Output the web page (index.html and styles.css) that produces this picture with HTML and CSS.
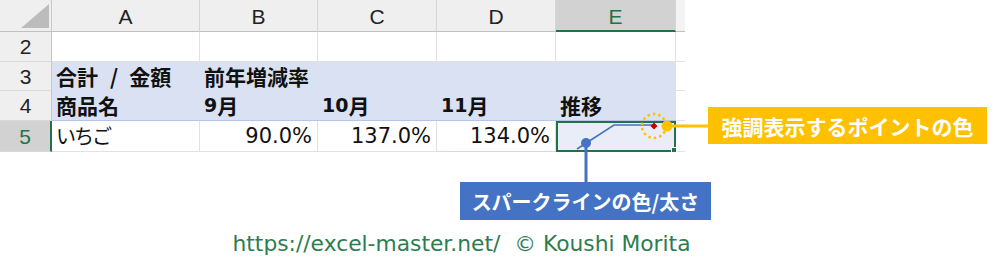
FILE: index.html
```html
<!DOCTYPE html>
<html lang="ja">
<head>
<meta charset="utf-8">
<link rel="stylesheet" href="styles.css">
</head>
<body>
<div class="page">
  <div class="sheet">
    <div class="row hdr-row">
      <div class="c rh corner"><svg class="tri" width="40" height="24" viewBox="0 0 40 24"><polygon points="40,0 40,24 12,24" fill="#bcbcbc"/></svg></div>
      <div class="c ca ch">A</div>
      <div class="c cb ch">B</div>
      <div class="c cc ch">C</div>
      <div class="c cd ch">D</div>
      <div class="c ce ch sel">E</div>
      <div class="c cf ch"></div>
    </div>
    <div class="row r2">
      <div class="c rh">2</div>
      <div class="c ca g"></div>
      <div class="c cb g"></div>
      <div class="c cc g"></div>
      <div class="c cd g"></div>
      <div class="c ce g"></div>
      <div class="c cf g"></div>
    </div>
    <div class="row r3">
      <div class="c rh">3</div>
      <div class="c ca p b">合計<span class="sep">/</span>金額</div>
      <div class="c cb p b">前年増減率</div>
      <div class="c cc p"></div>
      <div class="c cd p"></div>
      <div class="c ce p"></div>
      <div class="c cf g"></div>
    </div>
    <div class="row r4">
      <div class="c rh">4</div>
      <div class="c ca p pb b">商品名</div>
      <div class="c cb p pb b"><span class="d">9</span>月</div>
      <div class="c cc p pb b"><span class="d">10</span>月</div>
      <div class="c cd p pb b"><span class="d">11</span>月</div>
      <div class="c ce p pb b">推移</div>
      <div class="c cf g"></div>
    </div>
    <div class="row r5">
      <div class="c rh rsel">5</div>
      <div class="c ca g kana">いちご</div>
      <div class="c cb g num">90.0%</div>
      <div class="c cc g num">137.0%</div>
      <div class="c cd g num pink">134.0%</div>
      <div class="c ce g active"><span class="handle"></span></div>
      <div class="c cf g"></div>
    </div>
  </div>
  <div class="footer">https://excel-master.net/&nbsp;&nbsp;© Koushi Morita</div>

  <svg class="overlay" width="1000" height="264" viewBox="0 0 1000 264">
    <polyline points="577,149 614,125 652,125" fill="none" stroke="#4472c4" stroke-width="1.6"/>
    <line x1="586" y1="143" x2="586" y2="183" stroke="#4472c4" stroke-width="3"/>
    <circle cx="586" cy="143" r="5" fill="#4472c4"/>
    <circle cx="654" cy="126" r="12" fill="none" stroke="#ffc000" stroke-width="2.5" stroke-dasharray="2.5 3"/>
    <polygon points="654,122.5 657.5,126 654,129.5 650.5,126" fill="#c00000"/>
    <line x1="667" y1="126" x2="709" y2="126" stroke="#ffc000" stroke-width="3"/>
    <circle cx="667" cy="126" r="5.5" fill="#ffc000"/>
  </svg>
  <div class="callout yellow">強調表示するポイントの色</div>
  <div class="callout blue">スパークラインの色/太さ</div>
</div>
</body>
</html>
```

FILE: styles.css
```css
* { box-sizing: border-box; }
html, body { margin: 0; padding: 0; background: #fff; }
body { width: 1000px; height: 264px; overflow: hidden; }
.page { position: relative; width: 1000px; height: 264px; }

.sheet { display: flex; flex-direction: column; width: 685px; }
.row { display: flex; }
.hdr-row { height: 32px; }
.r2 { height: 30px; }
.r3 { height: 29px; }
.r4 { height: 30px; }
.r5 { height: 31px; }

.c {
  font-family: "Noto Sans CJK JP", "Noto Sans", sans-serif;
  font-size: 20px;
  color: #111;
  display: flex;
  align-items: center;
  white-space: nowrap;
  line-height: 1;
  padding: 0 4px;
}
.rh { width: 52px; justify-content: center; background: #efefef; border-right: 1px solid #c8c8c8; border-bottom: 1px solid #d8d8d8; color: #222; font-family: "Liberation Sans", sans-serif; font-size: 21px; padding: 0; }
.corner { position: relative; border-bottom: 1px solid #c0c0c0; justify-content: flex-end; align-items: flex-end; padding: 0 2px 3px 0; }
.tri { display: block; }
.ca { width: 148px; }
.cb { width: 118px; }
.cc { width: 119px; }
.cd { width: 119px; }
.ce { width: 120px; }
.cf { width: 9px; padding: 0; }

.ch { background: #efefef; justify-content: center; border-right: 1px solid #d6d6d6; border-bottom: 1px solid #c0c0c0; font-family: "Liberation Sans", sans-serif; font-size: 21px; color: #222; padding-top: 2px; }
.ch.cf { border-right: none; background: #f3f3f3; }
.ch.sel { background: #d2d2d2; color: #217346; border-bottom: 2px solid #217346; }

.g { border-right: 1px solid #e2e2e2; border-bottom: 1px solid #e2e2e2; }
.cf.g { border-right: none; }
.p { background: #d9e1f2; }
.pb { border-bottom: 1px solid #b4c6e7; }
.b { font-weight: 700; font-size: 21px; }
.sep { margin: 0 11px 0 12px; }
.d { font-family: "DejaVu Sans", sans-serif; font-size: 19px; }
.kana { letter-spacing: -2px; }
.num { justify-content: flex-end; padding-right: 5px; font-family: "DejaVu Sans", sans-serif; font-size: 21px; }
.pink { border-bottom: 1px solid #ffc7ce; }

.rsel { background: #d2d2d2; color: #217346; border-right: 2px solid #217346; }

.active { position: relative; background: #e9edf7; border: 2px solid #217346; }
.handle { position: absolute; right: -3px; bottom: -3px; width: 6px; height: 6px; background: #217346; border: 1px solid #fff; }

.footer {
  margin-top: 78px;
  text-align: center;
  font-family: "DejaVu Sans", sans-serif;
  font-size: 21.8px;
  line-height: 28px;
  color: #2e7d4f;
  padding-right: 77px;
}

.overlay { position: absolute; left: 0; top: 0; pointer-events: none; }

.callout {
  position: absolute;
  display: flex;
  align-items: center;
  justify-content: center;
  font-family: "Noto Sans CJK JP", sans-serif;
  font-weight: 700;
  color: #fff;
  white-space: nowrap;
}
.yellow { left: 708px; top: 107px; width: 279px; height: 37px; background: #ffc000; font-size: 21px; }
.blue { left: 460px; top: 182px; width: 251px; height: 38px; background: #4472c4; font-size: 20px; }
```
